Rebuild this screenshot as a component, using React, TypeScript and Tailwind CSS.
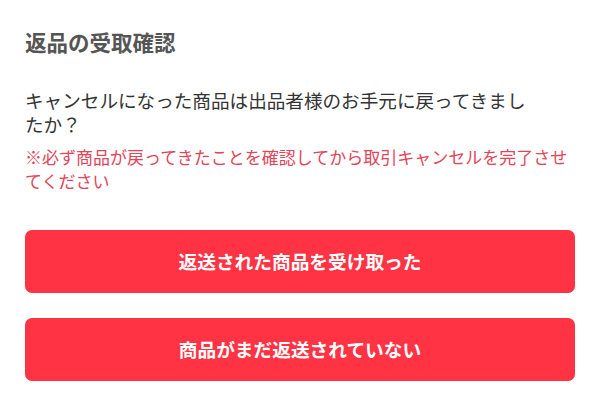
export default function App() {
  return (
    <div
      className="min-h-screen bg-white px-[25px] pt-[29px]"
      style={{ fontFamily: '"Noto Sans CJK JP", "Noto Sans", sans-serif' }}
    >
      <h1 className="text-[21.5px] font-bold leading-[26px] text-[#555]">返品の受取確認</h1>

      <p className="mt-[33px] max-w-[512px] text-[18.6px] leading-[24px] text-[#333]">
        キャンセルになった商品は出品者様のお手元に戻ってきましたか？
      </p>

      <p className="mt-[9px] text-[17px] leading-[24px] text-[#e24459]">
        ※必ず商品が戻ってきたことを確認してから取引キャンセルを完了させてください
      </p>

      <div className="mt-[37px] flex flex-col gap-[25px]">
        <button className="h-[63px] w-full rounded-[7px] bg-[#ff3344] text-[18.7px] font-bold text-white">
          返送された商品を受け取った
        </button>
        <button className="h-[63px] w-full rounded-[7px] bg-[#ff3344] text-[18.7px] font-bold text-white">
          商品がまだ返送されていない
        </button>
      </div>
    </div>
  );
}
